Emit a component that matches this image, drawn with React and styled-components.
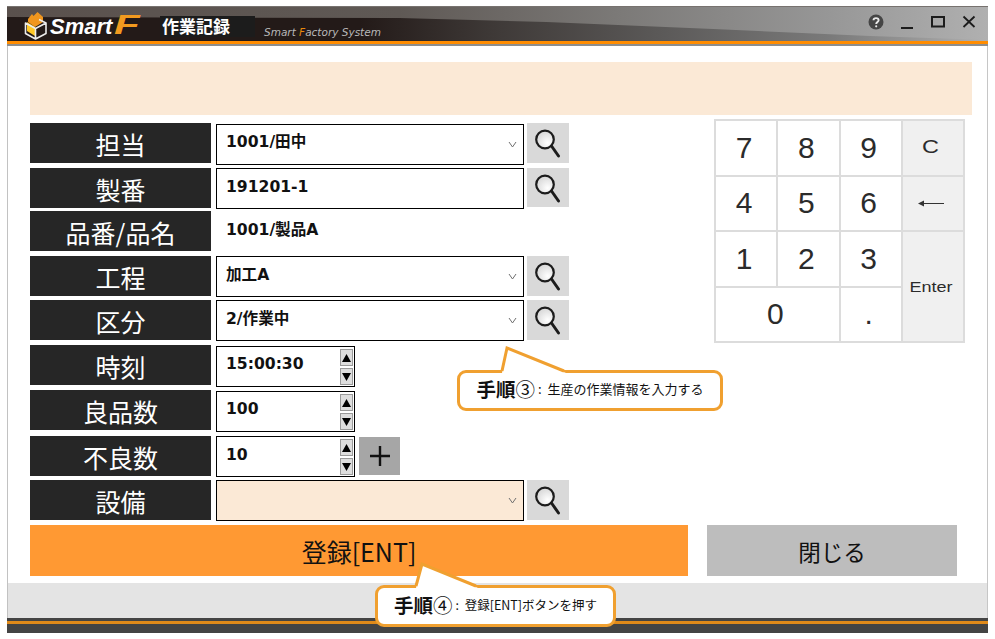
import React from "react"
import styled, { createGlobalStyle } from "styled-components"

const GlobalStyle = createGlobalStyle`
  html, body {
    margin: 0;
    padding: 0;
    background: #fff;
  }
  * {
    box-sizing: border-box;
  }
`

const JP = `"Noto Sans CJK JP", "Noto Sans", sans-serif`

const Stage = styled.div`
  width: 995px;
  height: 639px;
  padding: 6px 7px 6px 7px;
  position: relative;
  overflow: hidden;
  font-family: ${JP};
`

const Window = styled.div`
  width: 100%;
  height: 100%;
  display: flex;
  flex-direction: column;
  border-left: 1px solid #c2c2c2;
  border-right: 1px solid #c6c6c6;
`

const TitleBar = styled.header`
  position: relative;
  height: 40px;
  margin-left: -1px;
  margin-right: -1px;
  flex: none;
  display: flex;
  align-items: flex-start;
  overflow: hidden;
  border-top: 1px solid #77726f;
  border-bottom: 2px solid #8d8d8d;
  background: linear-gradient(90deg, #231a18 0, #231a18 36%, #3f3a38 50%, #5a5857 66%, #7a7a7a 84%, #b0b0b0 100%);

  &:before {
    content: "";
    position: absolute;
    inset: 0;
    background: linear-gradient(90deg, #5a514d 0, #5f5955 40%, #7b7977 62%, #979797 84%, #b0b0b0 100%);
    clip-path: polygon(0 0, 100% 0, 100% 33px, 88% 29px, 72% 22px, 55% 15px, 40% 11px, 0 10px);
  }

  &:after {
    content: "";
    position: absolute;
    left: 0;
    right: 0;
    bottom: 0;
    height: 3px;
    background: #ff8c00;
  }

  > * {
    position: relative;
    z-index: 1;
  }
`

const LogoMark = styled.svg`
  width: 23px;
  height: 29px;
  margin: 4px 0 0 17px;
  flex: none;
`

const LogoText = styled.span`
  margin: 5px 0 0 3px;
  width: 110px;
  flex: none;
  display: flex;
  align-items: baseline;
  font: italic bold 22px/26px "Liberation Sans", sans-serif;
  color: #fff;
  white-space: nowrap;
`

const LogoF = styled.span`
  display: inline-block;
  margin-left: 2px;
  font-size: 28px;
  color: #f29a1f;
  transform: scaleX(1.5);
  transform-origin: left center;
`

const ScreenName = styled.div`
  margin: 9px 0 0 0;
  width: 95px;
  height: 21px;
  background: #1c1c1c;
  color: #fff;
  font: 700 17px/20px ${JP};
  padding-left: 2px;
  white-space: nowrap;
  flex: none;
`

const Tagline = styled.div`
  margin: 18px 0 0 9px;
  font: italic 10.5px/14px "DejaVu Sans", sans-serif;
  color: #b8b8b8;
  white-space: nowrap;
`

const TaglineF = styled.span`
  color: #e8890c;
`

const WindowControls = styled.div`
  margin-left: auto;
  margin-right: 12px;
  display: flex;
  align-items: center;
  gap: 16px;
  height: 30px;
`

const ControlIcon = styled.svg`
  display: block;
  flex: none;
`

const Main = styled.main`
  flex: 1;
  padding: 16px 15px 0 22px;
  background: #fff;
`

const Banner = styled.div`
  height: 53px;
  background: #fbe9d6;
`

const WorkArea = styled.div`
  margin-top: 4px;
  display: flex;
  align-items: flex-start;
`

const Form = styled.div`
  width: 684px;
  flex: none;
  padding-top: 4px;
`

const Row = styled.div`
  display: flex;
  align-items: flex-start;
  height: 40px;
  margin-top: ${p => p.$gap || 0}px;
`

const Label = styled.div`
  width: 181px;
  height: 40px;
  flex: none;
  background: #262626;
  color: #fff;
  font: 400 25px/42px ${JP};
  text-align: center;
  white-space: nowrap;
`

const Field = styled.div`
  margin: ${p => (p.$flush ? 0 : 1)}px 0 0 5px;
  width: ${p => p.$width || 308}px;
  height: 41px;
  flex: none;
  position: relative;
  border: 1.5px solid #000;
  background: ${p => (p.$tint ? "#fbe9d6" : "#fff")};
  padding-left: 9px;
  font: 700 15.6px/${p => (p.$flush ? 37 : 35)}px "DejaVu Sans", ${JP};
  color: #111;
  white-space: nowrap;
`

const ReadOnlyValue = styled.div`
  margin: 1px 0 0 5px;
  padding-left: 10px;
  font: 700 15.6px/36px "DejaVu Sans", ${JP};
  color: #111;
  white-space: nowrap;
`

const Chevron = styled.svg`
  position: absolute;
  right: 6px;
  top: 16px;
`

const SearchButton = styled.div`
  margin-left: 3px;
  width: 42px;
  height: ${p => (p.$short ? 39 : 40)}px;
  flex: none;
  background: #d9d9d9;
  display: flex;
  justify-content: center;
  padding-top: 5px;
`

const Spinner = styled.div`
  position: absolute;
  right: 1px;
  top: 2px;
  display: flex;
  flex-direction: column;
  gap: 2px;
`

const SpinButton = styled.div`
  width: 13px;
  height: 17px;
  background: #dedede;
  border: 1px solid #9a9a9a;
  display: flex;
  align-items: center;
  justify-content: center;
`

const PlusButton = styled.div`
  margin: 1px 0 0 4px;
  width: 41px;
  height: 38px;
  background: #a6a6a6;
  display: flex;
  align-items: center;
  justify-content: center;
`

const Keypad = styled.div`
  width: 251px;
  height: 224px;
  flex: none;
  display: grid;
  grid-template-columns: repeat(4, 1fr);
  grid-template-rows: repeat(4, 1fr);
  gap: 2px;
  padding: 2px;
  background: #dcdcdc;
`

const Key = styled.div`
  display: flex;
  align-items: center;
  justify-content: center;
  padding-right: 4px;
  background: ${p => (p.$side ? "#f0f0f0" : "#fff")};
  color: #2b2b2b;
  font-family: "Liberation Sans", sans-serif;
  font-size: ${p => p.$size || 30}px;
  grid-column: ${p => (p.$wide ? "span 2" : "auto")};
  grid-row: ${p => (p.$tall ? "span 2" : "auto")};
`

const KeyText = styled.span`
  display: inline-block;
  transform: scaleX(${p => p.$stretch || 1});
`

const Actions = styled.div`
  display: flex;
  gap: 19px;
  margin-top: 5px;
`

const ActionButton = styled.div`
  height: 51px;
  width: ${p => p.$width}px;
  background: ${p => p.$bg};
  color: #111;
  font: 400 ${p => p.$size || 25}px/53px ${JP};
  text-align: center;
  flex: none;
`

const Footer = styled.footer`
  height: 50px;
  flex: none;
  background: #e4e4e4;
  padding-top: 35px;
`

const FooterBar = styled.div`
  height: 15px;
  margin-left: -1px;
  margin-right: -1px;
  background: #444;
  border-top: 3px solid #444;
  position: relative;

  &:before {
    content: "";
    position: absolute;
    left: 0;
    right: 0;
    top: 0;
    height: 3px;
    background: #e08a1a;
  }
`

const Callout = styled.div`
  position: absolute;
  left: ${p => p.$left}px;
  top: ${p => p.$top}px;
  width: ${p => p.$width}px;
  height: ${p => p.$height}px;
  padding-bottom: 3px;
  background: #fff;
  border: 3px solid #f0a030;
  border-radius: 9px;
  display: flex;
  align-items: center;
  justify-content: center;
  white-space: nowrap;
  color: #111;
`

const CalloutStep = styled.span`
  font: 700 19.5px/22px ${JP};
`

const CalloutNumber = styled.span`
  font-weight: 400;
`

const CalloutText = styled.span`
  font: 400 ${p => p.$size}px/22px ${JP};
  margin-left: 3px;
  word-spacing: 3px;
`

const CalloutTail = styled.svg`
  position: absolute;
  left: 0;
  top: 0;
  width: 995px;
  height: 639px;
  pointer-events: none;
`

const Magnifier = () => (
  <svg width="28" height="30" viewBox="0 0 28 30">
    <defs>
      <radialGradient id="glass" cx="0.65" cy="0.7" r="0.6">
        <stop offset="0" stopColor="#ffffff" />
        <stop offset="1" stopColor="#dddddd" />
      </radialGradient>
    </defs>
    <circle cx="11" cy="11.5" r="8.8" fill="url(#glass)" stroke="#1c1c1c" strokeWidth="2.2" />
    <path d="M17.5 18 L24.5 28" stroke="#1c1c1c" strokeWidth="3" strokeLinecap="round" />
  </svg>
)

const DownChevron = () => (
  <Chevron width="9" height="7" viewBox="0 0 9 7">
    <path d="M1 1 L4.5 6 L8 1" fill="none" stroke="#707070" strokeWidth="1" />
  </Chevron>
)

const NumberSpinner = () => (
  <Spinner>
    <SpinButton>
      <svg width="9" height="8" viewBox="0 0 9 8"><path d="M4.5 0 L9 8 L0 8 Z" fill="#000" /></svg>
    </SpinButton>
    <SpinButton>
      <svg width="9" height="8" viewBox="0 0 9 8"><path d="M0 0 L9 0 L4.5 8 Z" fill="#000" /></svg>
    </SpinButton>
  </Spinner>
)

const spinRows = [
  { label: "時刻", value: "15:00:30", gap: 5 },
  { label: "良品数", value: "100", gap: 5 },
  { label: "不良数", value: "10", gap: 6, flush: true, plus: true },
]

const keys = [
  { text: "7" }, { text: "8" }, { text: "9" },
  { text: "C", side: true, size: 18, stretch: 1.3 },
  { text: "4" }, { text: "5" }, { text: "6" },
  { text: "back", side: true },
  { text: "1" }, { text: "2" }, { text: "3" },
  { text: "Enter", side: true, size: 15, stretch: 1.2, tall: true },
  { text: "0", wide: true }, { text: "." },
]

const SelectRow = ({ label, value, gap, flush, hasSelect = true, short }) => (
  <Row $gap={gap}>
    <Label>{label}</Label>
    <Field $flush={flush}>
      {value}
      {hasSelect && <DownChevron />}
    </Field>
    <SearchButton $short={short}>
      <Magnifier />
    </SearchButton>
  </Row>
)

const BackArrow = () => (
  <svg width="26" height="9" viewBox="0 0 26 9">
    <path d="M1 4.5 H26" stroke="#333" strokeWidth="1" />
    <path d="M0 4.5 L6 1.5 L6 7.5 Z" fill="#333" />
  </svg>
)

export default function App() {
  return (
    <Stage>
      <GlobalStyle />
      <Window>
        <TitleBar>
          <LogoMark viewBox="0 0 23 29">
            <path d="M4 8 L8 3 L9.5 5 L13.5 1 L19 6 L19 11 L11 16 L4 11 Z" fill="#f0961e" />
            <path d="M3 11 L11 16 L11 25 L3 20 Z" fill="#ffc928" />
            <path d="M15 8.5 L22 12 L22 22.5 L11.5 28 L1.5 22.5 L1.5 12 L11.5 17.5 L22 12 M11.5 17.5 V28" fill="none" stroke="#ececec" strokeWidth="1.6" strokeLinejoin="round" />
          </LogoMark>
          <LogoText>
            Smart<LogoF>F</LogoF>
          </LogoText>
          <ScreenName>作業記録</ScreenName>
          <Tagline>
            Smart <TaglineF>F</TaglineF>actory System
          </Tagline>
          <WindowControls>
            <ControlIcon width="16" height="16" viewBox="0 0 16 16">
              <circle cx="8" cy="8" r="7.5" fill="#454545" />
              <path d="M5.5 6.2 C5.5 3.4 10.6 3.4 10.6 6.2 C10.6 8 8.2 8 8.2 10" fill="none" stroke="#e8e8e8" strokeWidth="1.9" />
              <circle cx="8.2" cy="12.3" r="1.1" fill="#e8e8e8" />
            </ControlIcon>
            <ControlIcon width="14" height="16" viewBox="0 0 14 16">
              <path d="M1 14 H13" stroke="#1c1c1c" strokeWidth="2" />
            </ControlIcon>
            <ControlIcon width="16" height="14" viewBox="0 0 16 14">
              <rect x="2" y="2" width="12" height="9.5" fill="none" stroke="#1c1c1c" strokeWidth="2" />
            </ControlIcon>
            <ControlIcon width="14" height="14" viewBox="0 0 14 14">
              <path d="M1.5 1.5 L12.5 12 M12.5 1.5 L1.5 12" stroke="#1c1c1c" strokeWidth="1.8" />
            </ControlIcon>
          </WindowControls>
        </TitleBar>

        <Main>
          <Banner />
          <WorkArea>
            <Form>
              <SelectRow label="担当" value="1001/田中" />
              <SelectRow label="製番" value="191201-1" gap={5} flush hasSelect={false} short />
              <Row $gap={3}>
                <Label>品番/品名</Label>
                <ReadOnlyValue>1001/製品A</ReadOnlyValue>
              </Row>
              <SelectRow label="工程" value="加工A" gap={5} flush />
              <SelectRow label="区分" value="2/作業中" gap={4} flush />
              {spinRows.map(row => (
                <Row key={row.label} $gap={row.gap}>
                  <Label>{row.label}</Label>
                  <Field $width={139} $flush={row.flush}>
                    {row.value}
                    <NumberSpinner />
                  </Field>
                  {row.plus && (
                    <PlusButton>
                      <svg width="22" height="22" viewBox="0 0 22 22">
                        <path d="M11 1 V21 M1 11 H21" stroke="#111" strokeWidth="2.4" />
                      </svg>
                    </PlusButton>
                  )}
                </Row>
              ))}
              <Row $gap={4}>
                <Label>設備</Label>
                <Field $tint $flush>
                  <DownChevron />
                </Field>
                <SearchButton>
                  <Magnifier />
                </SearchButton>
              </Row>
            </Form>
            <Keypad>
              {keys.map(k => (
                <Key key={k.text} $side={k.side} $size={k.size} $wide={k.wide} $tall={k.tall}>
                  {k.text === "back" ? <BackArrow /> : <KeyText $stretch={k.stretch}>{k.text}</KeyText>}
                </Key>
              ))}
            </Keypad>
          </WorkArea>
          <Actions>
            <ActionButton $width={658} $bg="#ff9933">登録[ENT]</ActionButton>
            <ActionButton $width={250} $bg="#bdbdbd" $size={22.5}>閉じる</ActionButton>
          </Actions>
        </Main>

        <Footer>
          <FooterBar />
        </Footer>
      </Window>

      <Callout $left={457} $top={370} $width={266} $height={41}>
        <CalloutStep>手順<CalloutNumber>③</CalloutNumber></CalloutStep>
        <CalloutText $size={13}>: 生産の作業情報を入力する</CalloutText>
      </Callout>
      <CalloutTail viewBox="0 0 995 639">
        <path d="M502 373 L507 348 L566 373 Z" fill="#fff" />
        <path d="M502 371 L507 348 L564 371" fill="none" stroke="#f0a030" strokeWidth="3" />
      </CalloutTail>

      <Callout $left={375} $top={585} $width={241} $height={42}>
        <CalloutStep>手順<CalloutNumber>④</CalloutNumber></CalloutStep>
        <CalloutText $size={12.5}>: 登録[ENT]ボタンを押す</CalloutText>
      </Callout>
      <CalloutTail viewBox="0 0 995 639">
        <path d="M416 588 L422 564 L478 588 Z" fill="#fff" />
        <path d="M416 586 L422 564 L476 586" fill="none" stroke="#f0a030" strokeWidth="3" />
      </CalloutTail>
    </Stage>
  )
}
